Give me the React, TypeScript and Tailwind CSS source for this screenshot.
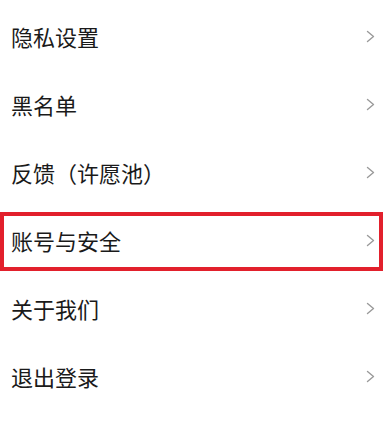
import React from "react";

const items = ["隐私设置", "黑名单", "反馈（许愿池）", "账号与安全", "关于我们", "退出登录"];

function Chevron() {
  return (
    <svg width="9" height="13" viewBox="0 0 9 13" fill="none" className="shrink-0">
      <path d="M1.5 1.5 L7.5 6.5 L1.5 11.5" stroke="#9a9a9a" strokeWidth="1.4" strokeLinecap="round" strokeLinejoin="round" />
    </svg>
  );
}

export default function App() {
  return (
    <div
      className="w-[390px] h-[431px] bg-white overflow-hidden pt-[2px]"
      style={{ fontFamily: '"Noto Sans CJK SC", "Noto Sans", sans-serif' }}
    >
      {items.map((t, i) => (
        <div key={t} className="relative h-[68px] flex items-center justify-between pl-[11px] pr-[15px]">
          <span className="text-[22px] leading-none text-[#1a1a1a]">{t}</span>
          <Chevron />
          {i === 3 && (
            <div className="absolute left-0 right-[7px] top-[6px] bottom-[3px] border-[4px] border-[#e2202c]" />
          )}
        </div>
      ))}
    </div>
  );
}
